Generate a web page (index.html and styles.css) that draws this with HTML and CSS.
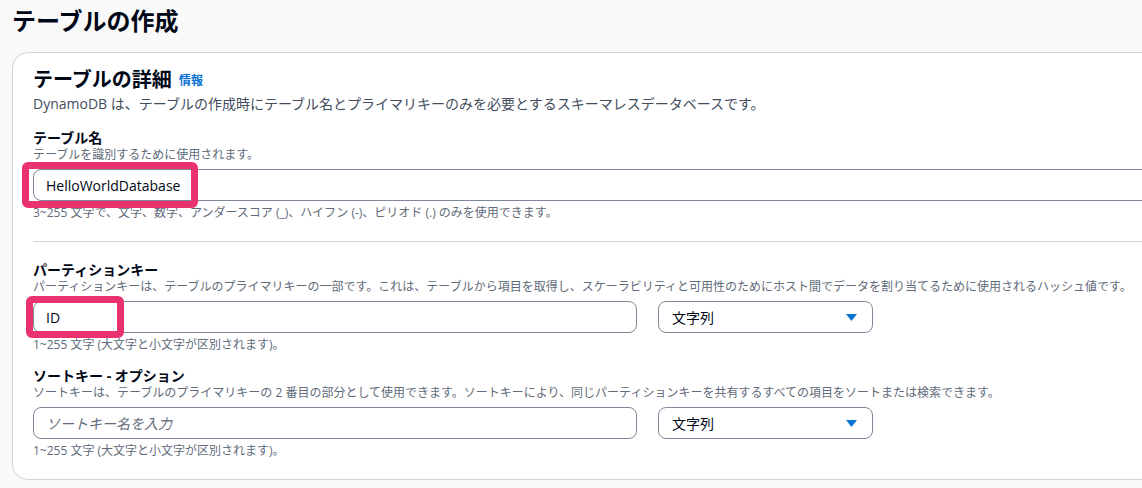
FILE: index.html
```html
<!DOCTYPE html>
<html lang="ja">
<head>
    <meta charset="UTF-8">
    <meta name="viewport" content="width=device-width, initial-scale=1.0">
    <title>テーブルの作成</title>
    <link rel="stylesheet" href="styles.css">
</head>
<body>
    <h1 class="page-title">テーブルの作成</h1>

    <section class="panel">
        <div class="panel-header">
            <h2>テーブルの詳細 <a class="info-link" href="#">情報</a></h2>
            <p class="panel-desc">DynamoDB は、テーブルの作成時にテーブル名とプライマリキーのみを必要とするスキーマレスデータベースです。</p>
        </div>

        <div class="field">
            <label class="field-label" for="table-name">テーブル名</label>
            <div class="field-help">テーブルを識別するために使用されます。</div>
            <div class="input-wrap full">
                <input type="text" id="table-name" class="text-input" value="HelloWorldDatabase">
                <span class="highlight highlight-name"></span>
            </div>
            <div class="field-constraint">3~255 文字で、文字、数字、アンダースコア (_)、ハイフン (-)、ピリオド (.) のみを使用できます。</div>
        </div>

        <hr class="divider">

        <div class="field">
            <label class="field-label" for="partition-key">パーティションキー</label>
            <div class="field-help">パーティションキーは、テーブルのプライマリキーの一部です。これは、テーブルから項目を取得し、スケーラビリティと可用性のためにホスト間でデータを割り当てるために使用されるハッシュ値です。</div>
            <div class="key-row">
                <div class="input-wrap">
                    <input type="text" id="partition-key" class="text-input" value="ID">
                    <span class="highlight highlight-id"></span>
                </div>
                <div class="select-box">
                    <span>文字列</span>
                    <svg width="11" height="7" viewBox="0 0 11 7"><path d="M0 0h11L5.5 7z" fill="#0972d3"/></svg>
                </div>
            </div>
            <div class="field-constraint">1~255 文字 (大文字と小文字が区別されます)。</div>
        </div>

        <div class="field">
            <label class="field-label" for="sort-key">ソートキー - オプション</label>
            <div class="field-help">ソートキーは、テーブルのプライマリキーの 2 番目の部分として使用できます。ソートキーにより、同じパーティションキーを共有するすべての項目をソートまたは検索できます。</div>
            <div class="key-row">
                <div class="input-wrap">
                    <input type="text" id="sort-key" class="text-input" placeholder="ソートキー名を入力">
                </div>
                <div class="select-box">
                    <span>文字列</span>
                    <svg width="11" height="7" viewBox="0 0 11 7"><path d="M0 0h11L5.5 7z" fill="#0972d3"/></svg>
                </div>
            </div>
            <div class="field-constraint">1~255 文字 (大文字と小文字が区別されます)。</div>
        </div>
    </section>
</body>
</html>
```

FILE: styles.css
```css
body {
    margin: 0;
    padding: 5px 0 0 12px;
    background-color: #f9f9fa;
    font-family: "Open Sans", "Noto Sans CJK JP", sans-serif;
    color: #000716;
    overflow: hidden;
}

.page-title {
    margin: 0;
    font-size: 24px;
    line-height: 32px;
    font-weight: 700;
}

.panel {
    margin-top: 15px;
    width: 1200px;
    background-color: #fff;
    border: 1px solid #d1d3d8;
    border-radius: 16px;
    padding: 15px 20px 20px 20px;
    box-sizing: border-box;
}

.panel-header h2 {
    margin: 0;
    font-size: 20px;
    line-height: 24px;
    font-weight: 700;
}

.info-link {
    margin-left: 2px;
    font-size: 12px;
    font-weight: 700;
    color: #0972d3;
    text-decoration: none;
    vertical-align: 2px;
}

.panel-desc {
    margin: 1px 0 0;
    font-size: 14px;
    line-height: 20px;
    color: #414d5c;
}

.field {
    margin-top: 15px;
}

.field + .field {
    margin-top: 14px;
}

.field-label {
    display: block;
    font-size: 14px;
    line-height: 18px;
    font-weight: 700;
}

.field-help,
.field-constraint {
    font-size: 12px;
    line-height: 16px;
    color: #5f6b7a;
    white-space: nowrap;
}

.field-constraint {
    margin-top: 4px;
}

.input-wrap {
    position: relative;
    width: 604px;
    margin-top: 6px;
}

.input-wrap.full {
    width: 100%;
}

.text-input {
    display: block;
    width: 100%;
    height: 32px;
    box-sizing: border-box;
    padding: 0 12px;
    border: 1px solid #7d8998;
    border-radius: 8px;
    font-family: inherit;
    font-size: 14px;
    color: #000716;
    background: #fff;
}

.text-input::placeholder {
    color: #5f6b7a;
    font-style: italic;
}

.highlight {
    position: absolute;
    border: 7px solid #e8336e;
    border-radius: 6px;
    box-sizing: border-box;
    pointer-events: none;
}

.highlight-name {
    left: -11px;
    top: -7px;
    width: 176px;
    height: 46px;
}

.highlight-id {
    left: -7px;
    top: -5px;
    width: 98px;
    height: 42px;
}

.divider {
    margin: 20px 0 0;
    border: none;
    border-top: 1px solid #d1d3d8;
}

.divider + .field {
    margin-top: 19px;
}

.key-row {
    display: flex;
    align-items: flex-end;
    gap: 21px;
}

.select-box {
    width: 215px;
    height: 32px;
    box-sizing: border-box;
    border: 1px solid #7d8998;
    border-radius: 8px;
    padding: 0 15px 0 13px;
    display: flex;
    align-items: center;
    justify-content: space-between;
    font-size: 14px;
}
```
